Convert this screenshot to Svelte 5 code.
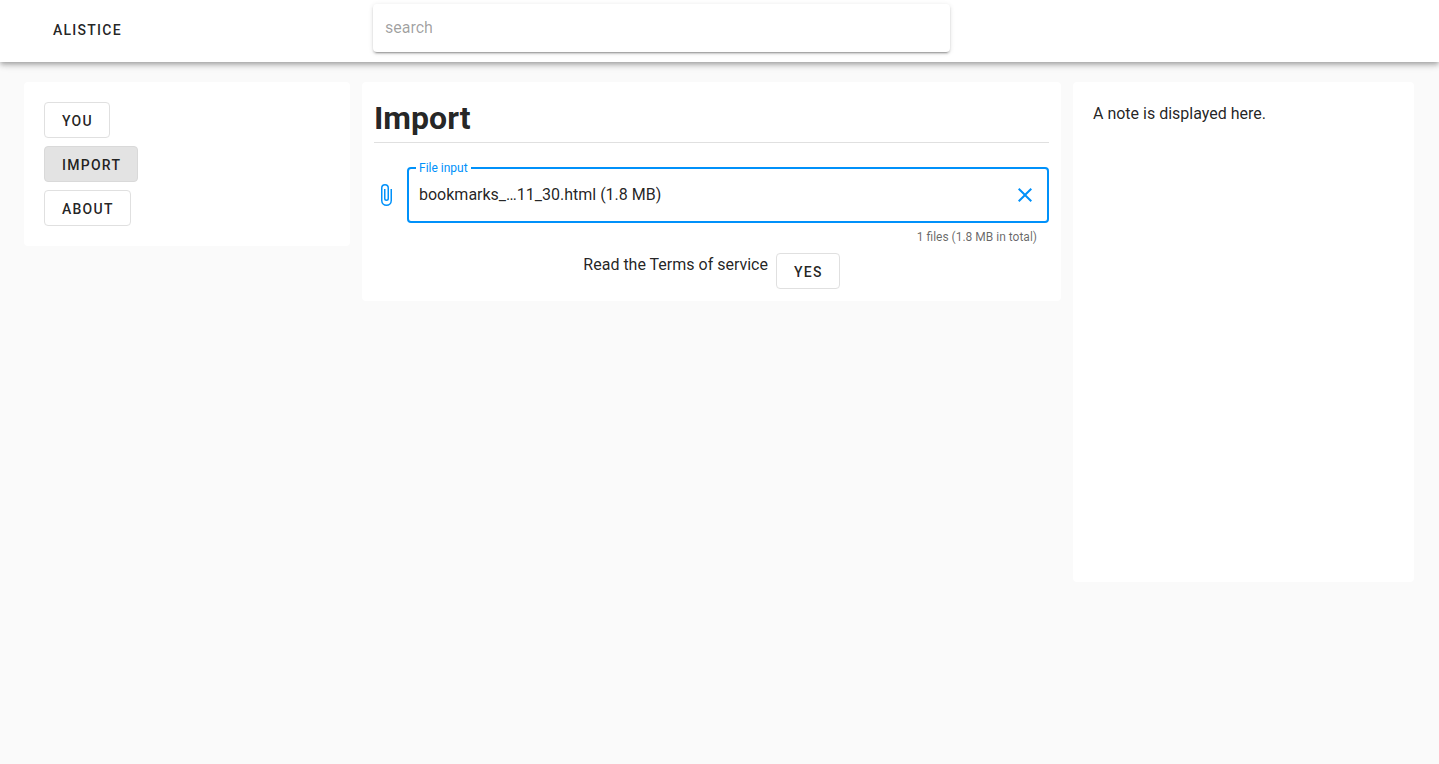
<script>
	const navItems = [
		{ label: 'You', active: false },
		{ label: 'Import', active: true },
		{ label: 'About', active: false }
	];
</script>

<header class="toolbar">
	<div class="brand">Alistice</div>
	<div class="search">
		<input type="text" placeholder="search" />
	</div>
</header>

<main class="page">
	<aside class="card nav">
		{#each navItems as item}
			<button class="btn" class:active={item.active}>{item.label}</button>
		{/each}
	</aside>

	<section class="card content">
		<h1>Import</h1>
		<div class="file-row">
			<svg class="clip" viewBox="0 0 24 24" width="24" height="24">
				<path d="M16.5,6V17.5A4,4 0 0,1 12.5,21.5A4,4 0 0,1 8.5,17.5V5A2.5,2.5 0 0,1 11,2.5A2.5,2.5 0 0,1 13.5,5V15.5A1,1 0 0,1 12.5,16.5A1,1 0 0,1 11.5,15.5V6H10V15.5A2.5,2.5 0 0,0 12.5,18A2.5,2.5 0 0,0 15,15.5V5A4,4 0 0,0 11,1A4,4 0 0,0 7,5V17.5A5.5,5.5 0 0,0 12.5,23A5.5,5.5 0 0,0 18,17.5V6H16.5Z" />
			</svg>
			<fieldset class="file-input">
				<legend>File input</legend>
				<span class="file-name">bookmarks_…11_30.html (1.8 MB)</span>
				<svg class="close" viewBox="0 0 24 24" width="24" height="24">
					<path d="M19,6.41L17.59,5L12,10.59L6.41,5L5,6.41L10.59,12L5,17.59L6.41,19L12,13.41L17.59,19L19,17.59L13.41,12L19,6.41Z" />
				</svg>
			</fieldset>
		</div>
		<div class="counter">1 files (1.8 MB in total)</div>
		<div class="terms">
			<span>Read the Terms of service</span>
			<button class="btn">Yes</button>
		</div>
	</section>

	<aside class="card note">A note is displayed here.</aside>
</main>

<style>
	:global(body) {
		background: #fafafa;
		font-family: Roboto, sans-serif;
		color: rgba(0, 0, 0, 0.87);
	}

	.toolbar {
		display: flex;
		height: 62px;
		background: #fff;
		box-shadow: 0 2px 4px -1px rgba(0, 0, 0, 0.2), 0 4px 5px 0 rgba(0, 0, 0, 0.14), 0 1px 10px 0 rgba(0, 0, 0, 0.12);
	}

	.brand {
		flex: none;
		width: 373px;
		padding: 22px 0 0 53px;
		box-sizing: border-box;
		font-size: 14px;
		line-height: 16px;
		font-weight: 500;
		letter-spacing: 1.25px;
		text-transform: uppercase;
	}

	.search {
		flex: none;
		width: 577px;
		height: 48px;
		margin-top: 4px;
		background: #fff;
		border-radius: 4px;
		box-shadow: 0 3px 1px -2px rgba(0, 0, 0, 0.2), 0 2px 2px 0 rgba(0, 0, 0, 0.14), 0 1px 5px 0 rgba(0, 0, 0, 0.12);
	}

	.search input {
		width: 100%;
		height: 100%;
		box-sizing: border-box;
		padding: 0 12px 2px;
		border: none;
		outline: none;
		background: transparent;
		font-family: inherit;
		font-size: 16px;
	}

	.search input::placeholder {
		color: rgba(0, 0, 0, 0.38);
	}

	.page {
		display: grid;
		grid-template-columns: 326px 699px 341px;
		gap: 12px;
		align-items: start;
		padding: 20px 24px 0;
	}

	.card {
		background: #fff;
		border-radius: 4px;
		box-sizing: border-box;
	}

	.nav {
		display: flex;
		flex-direction: column;
		align-items: flex-start;
		gap: 8px;
		height: 164px;
		padding: 20px;
	}

	.btn {
		height: 36px;
		padding: 1px 16px 0 17px;
		box-sizing: border-box;
		background: #fff;
		border: 1px solid #e0e0e0;
		border-radius: 4px;
		font-family: inherit;
		font-size: 14px;
		font-weight: 500;
		letter-spacing: 1.25px;
		text-transform: uppercase;
		color: rgba(0, 0, 0, 0.87);
	}

	.btn.active {
		background: #e3e3e3;
		border-color: #d9d9d9;
	}

	.content {
		height: 219px;
		padding: 12px;
	}

	h1 {
		margin: 0;
		height: 48px;
		border-bottom: 1px solid #e0e0e0;
		font-size: 32px;
		line-height: 48px;
		font-weight: 700;
	}

	.file-row {
		display: flex;
		align-items: flex-start;
		margin-top: 19px;
	}

	.clip {
		flex: none;
		margin: 21px 9px 0 0;
		fill: #0091fa;
	}

	.file-input {
		flex: 1;
		display: flex;
		align-items: center;
		justify-content: space-between;
		height: 61px;
		margin: 0;
		padding: 0 10px 7px 10px;
		box-sizing: border-box;
		border: 2px solid #0091fa;
		border-radius: 4px;
		min-width: 0;
	}

	legend {
		margin-left: -3px;
		padding: 0 3px;
		font-size: 12px;
		line-height: 12px;
		color: #0091fa;
	}

	.file-name {
		font-size: 16px;
	}

	.close {
		margin-top: 2px;
		fill: #0091fa;
	}

	.counter {
		padding: 7px 12px 0 0;
		text-align: right;
		font-size: 12px;
		line-height: 14px;
		color: rgba(0, 0, 0, 0.6);
	}

	.terms {
		display: flex;
		justify-content: center;
		align-items: flex-start;
		gap: 8px;
		margin-top: 9px;
		font-size: 16px;
		line-height: 24px;
	}

	.note {
		height: 500px;
		padding: 20px;
		font-size: 16px;
		line-height: 24px;
	}
</style>
